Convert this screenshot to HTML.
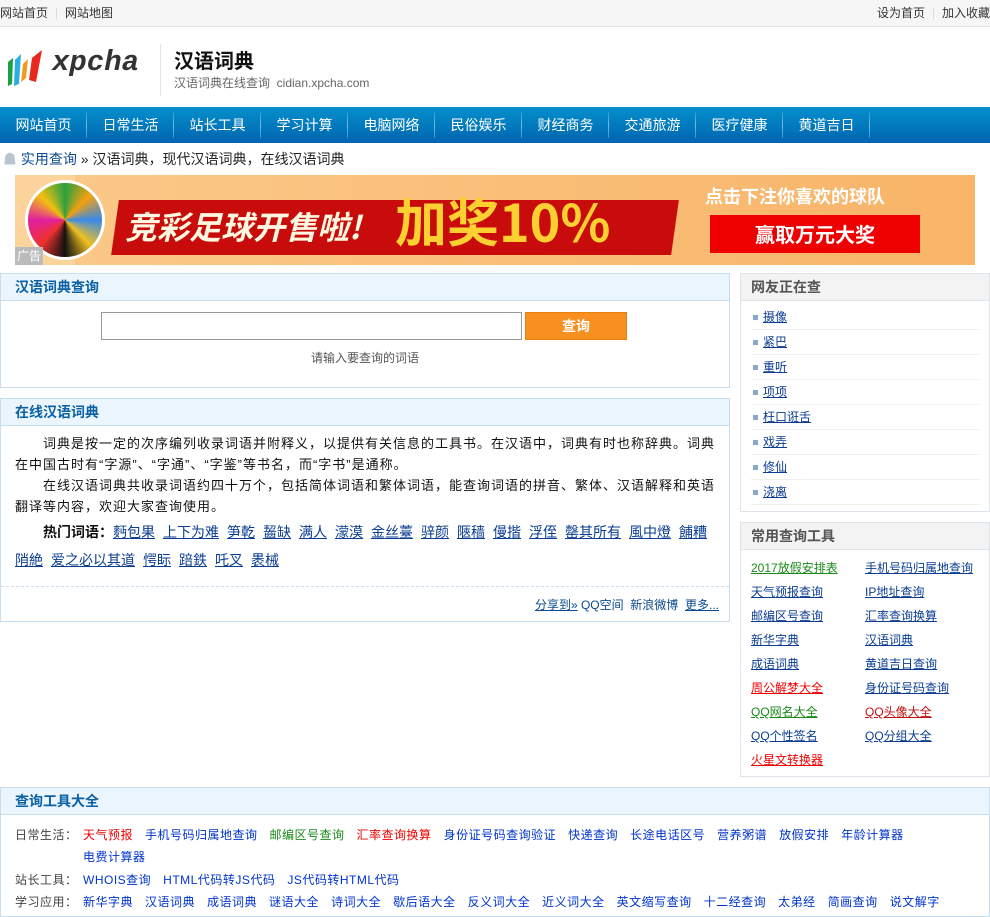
<!DOCTYPE html>
<html><head><meta charset="utf-8"><style>
*{margin:0;padding:0;box-sizing:border-box}
body{width:990px;height:900px;overflow:hidden;font:13px "Liberation Sans","Noto Sans CJK SC",sans-serif;color:#333;background:#fff;position:relative}
a{color:#0b3d91;text-decoration:underline}
.abs{position:absolute}
.top{left:0;top:0;width:990px;height:27px;background:#f6f6f6;border-bottom:1px solid #e6e6e6;line-height:26px;color:#333;font-size:12px}
.top span.sep{display:inline-block;width:1px;height:12px;background:#ddd;margin:0 8px;vertical-align:middle}
.nav{left:0;top:107px;width:990px;height:36px;background:linear-gradient(#0590cc,#0064b0)}
.nav div{float:left;height:36px;line-height:36px;color:#fff;font-size:14px;width:87px;text-align:center;position:relative}
.nav div:after{content:"";position:absolute;right:0;top:5px;height:26px;width:1px;background:linear-gradient(#2a9ad8,#7ab8e0,#2a9ad8)}
.box{border:1px solid #c8def0}
.bh{height:27px;background:#eaf5fe;border-bottom:1px solid #c8def0;line-height:26px;padding-left:14px;font-size:14px;font-weight:bold;color:#0b61a4}
.rbox{border:1px solid #dde3ea}
.rh{height:27px;background:#f3f3f3;border-bottom:1px solid #dde3ea;line-height:26px;padding-left:10px;font-size:14px;font-weight:bold;color:#555}
.li{height:25px;line-height:25px;border-bottom:1px solid #eee;margin:0 10px;padding-left:12px;position:relative;font-size:12px}
.li:before{content:"";position:absolute;left:2px;top:10px;width:5px;height:5px;background:#8aa8c8}
.tl{position:absolute;font-size:12px}
.g{color:#1a8a1a}.r{color:#e00}
.hot a{margin-right:8px}
.bt span,.bt a{margin-right:12px}
</style></head><body>
<div class="abs top"><span>网站首页</span><span class="sep"></span><span>网站地图</span>
<span style="position:absolute;right:0;top:0">设为首页<span class="sep"></span>加入收藏</span></div>

<svg class="abs" style="left:6px;top:46px" width="40" height="42" viewBox="0 0 40 42">
<polygon points="2,16 7,12 6,38 2,40" fill="#1aa04a"/><polygon points="9,14 15,8 13,38 8,40" fill="#2ab0e0"/>
<polygon points="17,18 22,13 20,32 15,36" fill="#f59a1e"/><polygon points="26,12 36,4 30,36 23,34" fill="#e8281e"/></svg>
<div class="abs" style="left:52px;top:46px;font:italic bold 29px 'Liberation Mono',monospace;color:#333">xpcha</div>
<div class="abs" style="left:160px;top:44px;width:1px;height:52px;background:#e4e4e4"></div>
<div class="abs" style="left:174px;top:45px;font-size:20px;font-weight:bold;color:#111">汉语词典</div>
<div class="abs" style="left:174px;top:74px;font-size:12px;color:#666">汉语词典在线查询 &nbsp;cidian.xpcha.com</div>

<div class="abs nav"><div>网站首页</div><div>日常生活</div><div>站长工具</div><div>学习计算</div><div>电脑网络</div><div>民俗娱乐</div><div>财经商务</div><div>交通旅游</div><div>医疗健康</div><div>黄道吉日</div></div>

<div class="abs" style="left:3px;top:149px;font-size:14px;line-height:20px;color:#222"><span style="color:#b8c4d0">&#9751;</span> <span style="color:#0b4a8e">实用查询</span> » 汉语词典，现代汉语词典，在线汉语词典</div>

<div class="abs" style="left:15px;top:175px;width:960px;height:90px;background:linear-gradient(90deg,#fbc98a,#f8b468);overflow:hidden">
<div class="abs" style="left:0;top:0;width:60px;height:90px;background:#fcd39a"></div>
<div class="abs" style="left:10px;top:5px;width:80px;height:80px;border-radius:50%;background:conic-gradient(#2aa040,#f5a010,#3a8ae8,#f0c020,#111,#f03030,#e020a0,#f5c010,#2aa040);border:3px solid #fff"></div>
<div class="abs" style="left:100px;top:25px;width:560px;height:55px;background:#c80c0c;transform:skewX(-8deg)"></div>
<div class="abs" style="left:110px;top:28px;font:bold italic 32px 'Noto Sans CJK SC',sans-serif;color:#fff8e0">竞彩足球开售啦!</div>
<div class="abs" style="left:380px;top:10px;font:bold 52px 'Noto Sans CJK SC',sans-serif;color:#fcd030;line-height:70px">加奖10%</div>
<div class="abs" style="left:690px;top:8px;font:bold 18px 'Noto Sans CJK SC',sans-serif;color:#fff">点击下注你喜欢的球队</div>
<div class="abs" style="left:695px;top:40px;width:210px;height:38px;background:#e00;color:#fff;font:bold 20px 'Noto Sans CJK SC',sans-serif;text-align:center;line-height:38px">赢取万元大奖</div>
<div class="abs" style="left:0;top:72px;width:28px;height:18px;background:#bbb;color:#fff;font-size:12px;line-height:18px;text-align:center">广告</div>
</div>

<div class="abs box" style="left:0;top:273px;width:730px;height:115px">
<div class="bh">汉语词典查询</div>
<div class="abs" style="left:100px;top:38px;width:421px;height:28px;border:1px solid #999"></div>
<div class="abs" style="left:524px;top:38px;width:102px;height:28px;background:#f7901e;border:1px solid #e88010;color:#fff;font-size:14px;font-weight:bold;text-align:center;line-height:26px">查询</div>
<div class="abs" style="left:0;top:75px;width:728px;text-align:center;font-size:12px;color:#555">请输入要查询的词语</div>
</div>

<div class="abs box" style="left:0;top:398px;width:730px;height:224px">
<div class="bh">在线汉语词典</div>
<div style="padding:7px 8px 0 14px;line-height:21px;font-size:13px;letter-spacing:1px;color:#111">
<p style="text-indent:28px">词典是按一定的次序编列收录词语并附释义，以提供有关信息的工具书。在汉语中，词典有时也称辞典。词典在中国古时有“字源”、“字通”、“字鉴”等书名，而“字书”是通称。</p>
<p style="text-indent:28px">在线汉语词典共收录词语约四十万个，包括简体词语和繁体词语，能查询词语的拼音、繁体、汉语解释和英语翻译等内容，欢迎大家查询使用。</p>
<p class="hot" style="text-indent:28px;line-height:28px;margin-top:1px;letter-spacing:0;font-size:14px"><b>热门词语：</b><a>麪包果</a><a>上下为难</a><a>笋乾</a><a>齧缺</a><a>满人</a><a>濛漠</a><a>金丝薹</a><a>骍颜</a><a>陿穑</a><a>僈揩</a><a>浮侄</a><a>罄其所有</a><a>風中燈</a><a>餔糟</a><a>陗絶</a><a>爱之必以其道</a><a>愕眎</a><a>踣鉄</a><a>吒叉</a><a>褁械</a></p>
</div>
<div class="abs" style="left:0;top:187px;width:728px;border-top:1px dashed #c8def0"></div>
<div class="abs" style="right:10px;top:197px;font-size:12px;color:#0b4a8e"><a style="color:#0b4a8e">分享到»</a> QQ空间 &nbsp;新浪微博 &nbsp;<a style="color:#0b4a8e">更多...</a></div>
</div>

<div class="abs rbox" style="left:740px;top:273px;width:250px;height:239px">
<div class="rh">网友正在查</div>
<div style="padding-top:4px"><div class="li"><a>摄像</a></div><div class="li"><a>紧巴</a></div><div class="li"><a>重听</a></div><div class="li"><a>项项</a></div><div class="li"><a>枉口诳舌</a></div><div class="li"><a>戏弄</a></div><div class="li"><a>修仙</a></div><div class="li"><a>浇离</a></div></div>
</div>

<div class="abs rbox" style="left:740px;top:522px;width:250px;height:255px">
<div class="rh">常用查询工具</div>
<div style="position:relative">
<a class="tl g" style="left:10px;top:9px">2017放假安排表</a><a class="tl" style="left:124px;top:9px">手机号码归属地查询</a>
<a class="tl" style="left:10px;top:33px">天气预报查询</a><a class="tl" style="left:124px;top:33px">IP地址查询</a>
<a class="tl" style="left:10px;top:57px">邮编区号查询</a><a class="tl" style="left:124px;top:57px">汇率查询换算</a>
<a class="tl" style="left:10px;top:81px">新华字典</a><a class="tl" style="left:124px;top:81px">汉语词典</a>
<a class="tl" style="left:10px;top:105px">成语词典</a><a class="tl" style="left:124px;top:105px">黄道吉日查询</a>
<a class="tl r" style="left:10px;top:129px">周公解梦大全</a><a class="tl" style="left:124px;top:129px">身份证号码查询</a>
<a class="tl g" style="left:10px;top:153px">QQ网名大全</a><a class="tl" style="left:124px;top:153px;color:#c01010">QQ头像大全</a>
<a class="tl" style="left:10px;top:177px">QQ个性签名</a><a class="tl" style="left:124px;top:177px">QQ分组大全</a>
<a class="tl r" style="left:10px;top:201px">火星文转换器</a>
</div></div>

<div class="abs box" style="left:0;top:787px;width:990px;height:130px">
<div class="bh">查询工具大全</div>
<div class="bt" style="position:relative;font-size:12px;line-height:22px;letter-spacing:0.5px">
<div class="abs" style="left:14px;top:9px;color:#444">日常生活：</div>
<div class="abs" style="left:82px;top:9px;width:880px;color:#0033cc"><span class="r">天气预报</span><span>手机号码归属地查询</span><span class="g">邮编区号查询</span><span class="r">汇率查询换算</span><span>身份证号码查询验证</span><span>快递查询</span><span>长途电话区号</span><span>营养粥谱</span><span>放假安排</span><span>年龄计算器</span><br><span>电费计算器</span></div>
<div class="abs" style="left:14px;top:54px;color:#444">站长工具：</div>
<div class="abs" style="left:82px;top:54px;color:#0033cc"><span>WHOIS查询</span><span>HTML代码转JS代码</span><span>JS代码转HTML代码</span></div>
<div class="abs" style="left:14px;top:76px;color:#444">学习应用：</div>
<div class="abs" style="left:82px;top:76px;color:#0033cc;white-space:nowrap"><span>新华字典</span><span>汉语词典</span><span>成语词典</span><span>谜语大全</span><span>诗词大全</span><span>歇后语大全</span><span>反义词大全</span><span>近义词大全</span><span>英文缩写查询</span><span>十二经查询</span><span>太弟经</span><span>简画查询</span><span>说文解字</span></div>
</div></div>
</body></html>
